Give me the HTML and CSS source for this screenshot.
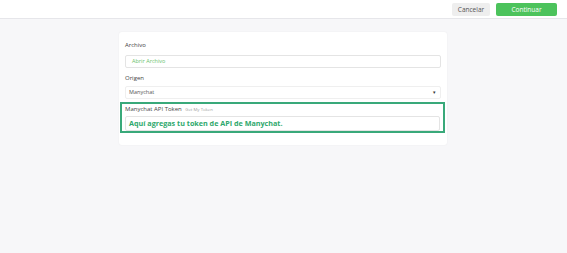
FILE: index.html
```html
<!DOCTYPE html>
<html lang="es">
<head>
    <meta charset="UTF-8">
    <title>Importar</title>
    <link rel="stylesheet" href="styles.css">
</head>
<body>
    <header class="topbar">
        <button class="btn btn-cancel">Cancelar</button>
        <button class="btn btn-continue">Continuar</button>
    </header>

    <main class="page">
        <section class="card">
            <div class="field">
                <label class="field-label">Archivo</label>
                <div class="input input-file">Abrir Archivo</div>
            </div>
            <div class="field">
                <label class="field-label">Origen</label>
                <div class="input input-select">
                    <span>Manychat</span>
                    <span class="caret">&#9662;</span>
                </div>
            </div>
            <div class="field field-highlight">
                <label class="field-label">Manychat API Token <span class="hint">Get My Token</span></label>
                <div class="input input-token">Aquí agregas tu token de API de Manychat.</div>
            </div>
        </section>
    </main>
</body>
</html>
```

FILE: styles.css
```css
body {
    margin: 0;
    font-family: "Open Sans", Arial, sans-serif;
    background: #f7f7f9;
    color: #333;
    height: 253px;
}
.topbar {
    height: 19px;
    background: #fff;
    border-bottom: 1px solid #e6e6ea;
    display: flex;
    justify-content: flex-end;
    align-items: center;
    gap: 6px;
    padding-right: 10px;
    box-sizing: border-box;
}
.btn {
    border: none;
    border-radius: 2px;
    font-family: inherit;
    font-size: 6.5px;
    height: 13px;
    padding: 0;
    cursor: pointer;
}
.btn-cancel {
    width: 38px;
    background: #eeeeee;
    color: #555;
    margin-top: 1px;
}
.btn-continue {
    width: 61px;
    background: #4cc35c;
    color: #fff;
}
.page {
    padding-top: 13px;
    padding-left: 119px;
}
.card {
    width: 328px;
    box-sizing: border-box;
    background: #fff;
    border-radius: 3px;
    box-shadow: 0 0 2px rgba(0, 0, 0, 0.06);
    padding: 9px 4px 12px 4px;
}
.field {
    padding: 0 2px;
}
.field-label {
    display: block;
    font-size: 6px;
    color: #444;
    margin-bottom: 6px;
    line-height: 8px;
}
.input {
    height: 13px;
    box-sizing: border-box;
    border: 1px solid #e4e4e4;
    border-radius: 2px;
    font-size: 5.5px;
    line-height: 11px;
    padding: 0 6px;
    color: #555;
}
.input-file {
    color: #6cbf6e;
    margin-bottom: 6px;
}
.input-select {
    display: flex;
    justify-content: space-between;
    padding: 0 4px 0 3px;
    border-color: #efefef;
    margin-top: -2px;
    margin-bottom: 3px;
}
.caret {
    font-size: 5px;
    color: #333;
}
.field-highlight {
    border: 2px solid #39a97a;
    margin: 0 -2px 0 -3px;
    padding: 1px 3px 0 3px;
}
.field-highlight .field-label {
    margin-bottom: 3px;
}
.hint {
    font-size: 4.3px;
    color: #a0a0a0;
    margin-left: 2px;
}
.input-token {
    height: 15px;
    line-height: 13px;
    padding: 0 3px;
    font-size: 7.2px;
    font-weight: bold;
    color: #2ea86c;
}
```
